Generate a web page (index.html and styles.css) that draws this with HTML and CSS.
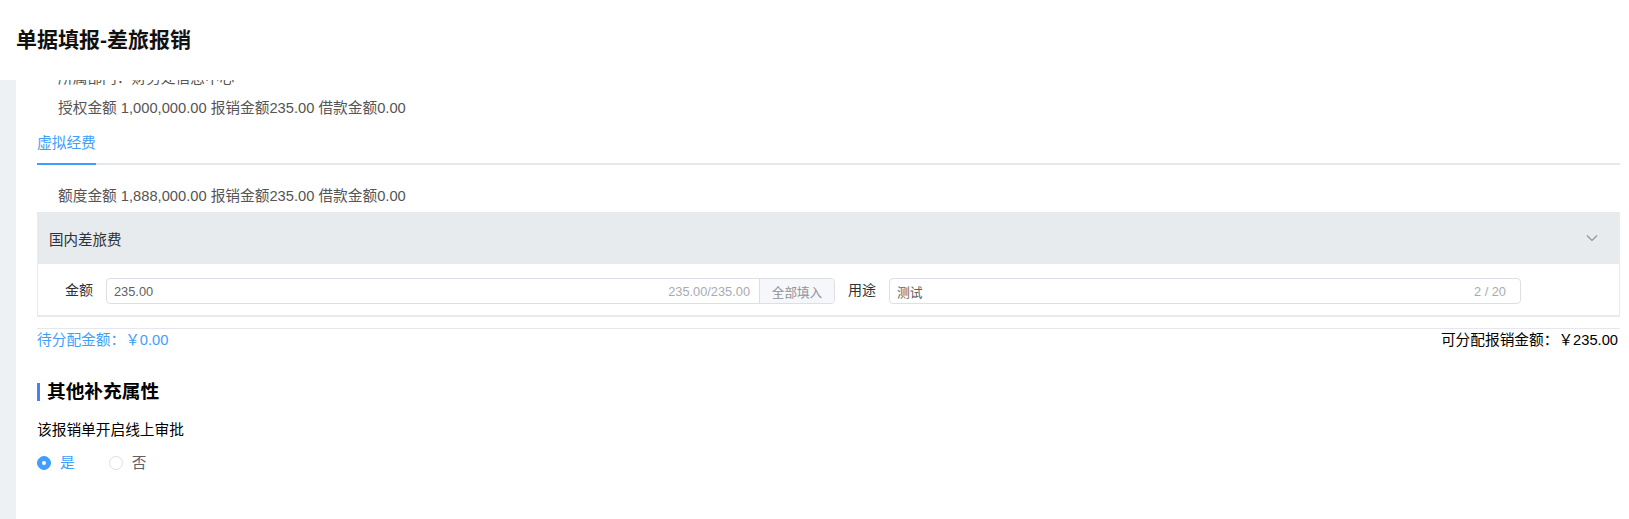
FILE: index.html
```html
<!DOCTYPE html>
<html lang="zh-CN">
<head>
    <meta charset="UTF-8" />
    <meta name="viewport" content="width=device-width, initial-scale=1.0" />
    <title>单据填报-差旅报销</title>
    <link rel="stylesheet" href="styles.css">
</head>
<body>
    <header class="page-header">
      <h1>单据填报-差旅报销</h1>
    </header>

    <div class="layout">
      <aside class="side-strip"></aside>

      <main class="content">
        <p class="info-line info-line--cut">所属部门：财务处信息中心</p>
        <p class="info-line">授权金额 1,000,000.00 报销金额235.00 借款金额0.00</p>

        <div class="tabs">
          <div class="tabs-nav">
            <span class="tab is-active">虚拟经费</span>
          </div>

          <div class="tab-pane">
            <p class="info-line">额度金额 1,888,000.00 报销金额235.00 借款金额0.00</p>

            <div class="collapse">
              <div class="collapse-header">
                <span>国内差旅费</span>
                <svg class="chevron" width="12" height="8" viewBox="0 0 12 8">
                  <path d="M1 1.5 L6 6.5 L11 1.5" fill="none" stroke="#909399" stroke-width="1.2" />
                </svg>
              </div>
              <div class="collapse-body">
                <div class="form-item">
                  <label class="form-label">金额</label>
                  <div class="input-group input-group--amount">
                    <div class="input-inner">
                      <span class="input-value">235.00</span>
                      <span class="input-count">235.00/235.00</span>
                    </div>
                    <button class="input-append">全部填入</button>
                  </div>
                </div>
                <div class="form-item">
                  <label class="form-label">用途</label>
                  <div class="input-group input-group--purpose">
                    <div class="input-inner">
                      <span class="input-value">测试</span>
                      <span class="input-count input-count--wide">2 / 20</span>
                    </div>
                  </div>
                </div>
              </div>
            </div>
          </div>
        </div>

        <div class="alloc-row">
          <span class="alloc-left">待分配金额：￥0.00</span>
          <span class="alloc-right">可分配报销金额：￥235.00</span>
        </div>

        <h2 class="section-title">其他补充属性</h2>
        <p class="field-label">该报销单开启线上审批</p>
        <div class="radio-group">
          <label class="radio is-checked"><span class="radio-dot"></span>是</label>
          <label class="radio"><span class="radio-dot"></span>否</label>
        </div>
      </main>
    </div>
</body>
</html>
```

FILE: styles.css
```css
body {
  margin: 0;
  font-family: "Liberation Sans", "Noto Sans CJK SC", sans-serif;
  font-size: 14.7px;
  color: #303133;
  background-color: #fff;
}
p {
  margin: 0;
}
.page-header {
  height: 80px;
  display: flex;
  align-items: center;
  padding: 0 0 4px 16px;
  box-sizing: border-box;
  background-color: #fff;
}
.page-header h1 {
  margin: 0;
  font-size: 21px;
  font-weight: bold;
  color: #111;
}
.layout {
  display: flex;
  height: 439px;
}
.side-strip {
  width: 16px;
  flex-shrink: 0;
  background-color: #eef1f4;
}
.content {
  flex: 1;
  overflow: hidden;
  padding: 0 9px 0 21px;
}
.info-line {
  line-height: 30px;
  padding-left: 21px;
  color: #555;
}
.info-line--cut {
  margin-top: -17px;
}
.tabs-nav {
  height: 40px;
  border-bottom: 2px solid #e4e7ed;
}
.tab {
  display: inline-block;
  height: 40px;
  line-height: 40px;
  color: #409eff;
  box-sizing: border-box;
  width: 59px;
  position: relative;
}
.tab.is-active::after {
  content: "";
  position: absolute;
  left: 0;
  right: 0;
  bottom: -2px;
  height: 2px;
  background-color: #409eff;
}
.tab-pane {
  padding-top: 16px;
}
.collapse {
  margin-top: 1px;
}
.collapse-header {
  height: 52px;
  display: flex;
  align-items: center;
  justify-content: space-between;
  padding: 0 22px 0 12px;
  background-color: #e8ebed;
  color: #303133;
  font-size: 14.5px;
}
.chevron {
  display: block;
}
.collapse-body {
  display: flex;
  align-items: center;
  padding: 14px 0 11px 27px;
  border: 1px solid #e8ebed;
  border-top: none;
  border-bottom-width: 2px;
}
.form-item {
  display: flex;
  align-items: center;
  flex-shrink: 0;
}
.form-item + .form-item {
  margin-left: 13px;
}
.form-label {
  width: 30px;
  flex-shrink: 0;
  white-space: nowrap;
  margin-right: 11px;
  font-size: 14px;
  color: #303133;
  position: relative;
  top: -2px;
}
.input-group {
  display: flex;
  flex-shrink: 0;
  height: 26px;
  border: 1px solid #dcdfe6;
  border-radius: 4px;
  box-sizing: border-box;
  overflow: hidden;
}
.input-group--amount {
  width: 729px;
}
.input-group--purpose {
  width: 632px;
}
.input-inner {
  flex: 1;
  display: flex;
  align-items: center;
  justify-content: space-between;
  padding: 0 9px 0 7px;
}
.input-value {
  color: #606266;
  font-size: 12.8px;
}
.input-count {
  color: #a8abb2;
  font-size: 12.8px;
}
.input-count--wide {
  margin-right: 5px;
}
.input-append {
  width: 75px;
  border: none;
  border-left: 1px solid #dcdfe6;
  background-color: #f5f7fa;
  color: #909399;
  font: inherit;
  font-size: 12.6px;
  padding: 0;
}
.alloc-row {
  display: flex;
  justify-content: space-between;
  margin-top: 11px;
  padding-right: 2px;
  border-top: 1px solid #e4e7ed;
  line-height: 23px;
}
.alloc-left {
  color: #409eff;
}
.alloc-right {
  color: #000;
}
.section-title {
  margin: 28px 0 0;
  font-size: 18.7px;
  line-height: 24px;
  font-weight: bold;
  color: #000;
  display: flex;
  align-items: center;
}
.section-title::before {
  content: "";
  width: 3px;
  height: 18px;
  margin-right: 7px;
  background-color: #4d7cfe;
}
.field-label {
  margin-top: 15px;
  line-height: 22px;
  color: #000;
}
.radio-group {
  display: flex;
  margin-top: 11px;
  line-height: 22px;
}
.radio {
  display: flex;
  align-items: center;
  color: #606266;
  margin-right: 34px;
}
.radio-dot {
  width: 14px;
  height: 14px;
  border: 1px solid #dcdfe6;
  border-radius: 50%;
  box-sizing: border-box;
  margin-right: 9px;
  background-color: #fff;
  position: relative;
}
.radio.is-checked {
  color: #409eff;
}
.radio.is-checked .radio-dot {
  border-color: #409eff;
  background-color: #409eff;
}
.radio.is-checked .radio-dot::after {
  content: "";
  position: absolute;
  left: 50%;
  top: 50%;
  width: 4px;
  height: 4px;
  margin: -2px 0 0 -2px;
  border-radius: 50%;
  background-color: #fff;
}
```
